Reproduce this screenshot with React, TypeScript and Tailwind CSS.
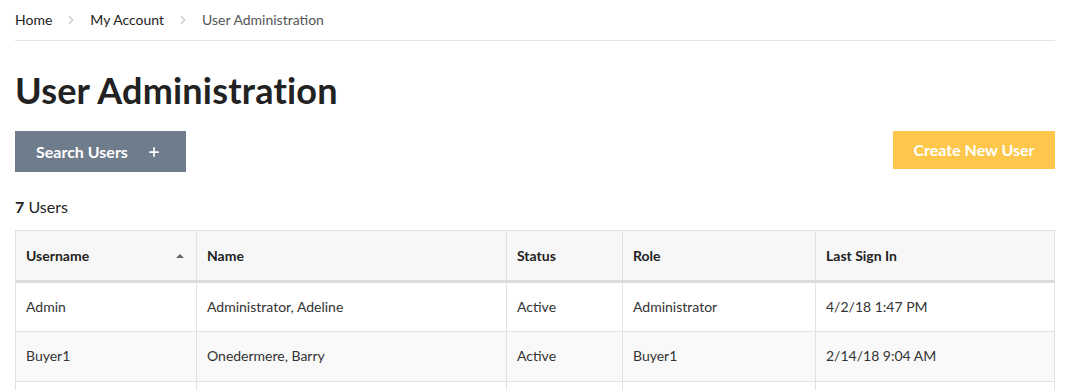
import { ChevronRight, Plus } from "lucide-react";

const users = [
  { username: "Admin", name: "Administrator, Adeline", status: "Active", role: "Administrator", lastSignIn: "4/2/18 1:47 PM" },
  { username: "Buyer1", name: "Onedermere, Barry", status: "Active", role: "Buyer1", lastSignIn: "2/14/18 9:04 AM" },
];

const columns = [
  { label: "Username", width: "w-[181px]" },
  { label: "Name", width: "w-[310px]" },
  { label: "Status", width: "w-[116px]" },
  { label: "Role", width: "w-[193px]" },
  { label: "Last Sign In", width: "" },
];

export default function App() {
  return (
    <div className="h-[390px] overflow-hidden bg-white pl-[15px] pr-[11px] font-['Lato',sans-serif] text-[#222]">
      <nav className="flex h-[41px] items-center border-b border-[#e3e3e3] pb-[1px] text-[14px]">
        <span className="text-[#222]">Home</span>
        <ChevronRight className="mx-[12px] h-[14px] w-[14px] text-[#c8c8c8]" strokeWidth={2} />
        <span className="text-[#222]">My Account</span>
        <ChevronRight className="mx-[12px] h-[14px] w-[14px] text-[#c8c8c8]" strokeWidth={2} />
        <span className="text-[#555]">User Administration</span>
      </nav>

      <h1 className="mt-[27px] text-[36px] font-bold leading-[44px] tracking-[0.2px] text-[#222]">User Administration</h1>

      <div className="mt-[19px] flex items-start justify-between">
        <button
          className="flex h-[41px] w-[171px] items-center gap-[19px] bg-[#6f7c8c] pl-[21px] text-[16px] font-bold text-white"
          type="button"
        >
          Search Users
          <Plus className="h-[14px] w-[14px]" strokeWidth={3} />
        </button>
        <button
          className="flex h-[38px] w-[162px] items-center justify-center bg-[#fec74c] text-[16px] font-bold text-white"
          type="button"
        >
          Create New User
        </button>
      </div>

      <p className="mt-[25px] text-[16px] leading-[20px]">
        <span className="font-bold">7</span> Users
      </p>

      <table className="mt-[13px] w-full border-collapse text-[14px]">
        <thead>
          <tr className="h-[51px] border-b-[3px] border-[#dcdcdc] bg-[#f7f7f7]">
            {columns.map((col, i) => (
              <th
                className={`${col.width} border border-[#e2e2e2] px-[10px] text-left font-bold text-[#222]`}
                key={col.label}
              >
                {i === 0 ? (
                  <span className="flex items-center justify-between pr-[2px]">
                    {col.label}
                    <span className="h-0 w-0 border-x-[4px] border-b-[4px] border-x-transparent border-b-[#666]" />
                  </span>
                ) : (
                  col.label
                )}
              </th>
            ))}
          </tr>
        </thead>
        <tbody>
          {users.map((u, i) => (
            <tr className={`h-[50px] ${i % 2 === 1 ? "bg-[#f9f9f9]" : "bg-white"}`} key={u.username}>
              <td className="border border-[#e2e2e2] px-[10px] pb-[2px] text-[#333]">{u.username}</td>
              <td className="border border-[#e2e2e2] px-[10px] pb-[2px] text-[#333]">{u.name}</td>
              <td className="border border-[#e2e2e2] px-[10px] pb-[2px] text-[#333]">{u.status}</td>
              <td className="border border-[#e2e2e2] px-[10px] pb-[2px] text-[#333]">{u.role}</td>
              <td className="border border-[#e2e2e2] px-[10px] pb-[2px] text-[#333]">{u.lastSignIn}</td>
            </tr>
          ))}
          <tr className="h-[50px] bg-white">
            <td className="border border-[#e2e2e2]" />
            <td className="border border-[#e2e2e2]" />
            <td className="border border-[#e2e2e2]" />
            <td className="border border-[#e2e2e2]" />
            <td className="border border-[#e2e2e2]" />
          </tr>
        </tbody>
      </table>
    </div>
  );
}
